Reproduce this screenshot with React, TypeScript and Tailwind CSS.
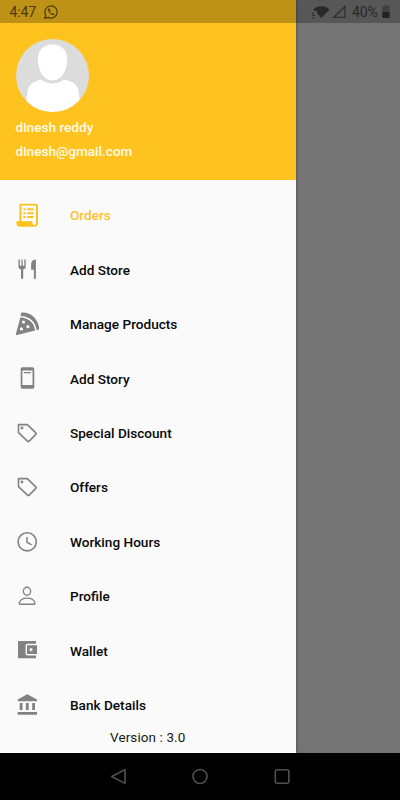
import type { ReactNode } from "react";

function Icon({ children, className = "text-[#828282]" }: { children: ReactNode; className?: string }) {
  return (
    <svg viewBox="0 0 24 24" className={`h-6 w-6 shrink-0 ${className}`} fill="currentColor">
      {children}
    </svg>
  );
}

const TagIcon = () => (
  <Icon>
    <path d="M3.5 3.600h8.800l8.500 8.200c.5.5.5 1.100 0 1.600l-6.600 6.700c-.5.5-1.200.5-1.700 0L3.500 11.600z" fill="none" stroke="currentColor" strokeWidth="1.6" strokeLinejoin="round" />
    <circle cx="7" cy="7" r="1.4" />
  </Icon>
);

const items: { label: string; icon: ReactNode; active?: boolean }[] = [
  {
    label: "Orders",
    active: true,
    icon: (
      <Icon className="text-[#fdc220]">
        <path fillRule="evenodd" d="M4.4.7h16.2c1.4 0 2.4 1 2.4 2.4v16.6c0 2.4-1.6 4.1-4 4.1H5.4c-2.4 0-4.1-1.6-4.1-4v-1.5h3.100zM6.400 2.600v15.600h11v2c0 1.200.6 1.800 1.700 1.800s1.900-.8 1.900-2V2.600z" />
        <path d="M8.5 5.3h2.2v2H8.5zM12.2 5.3h6.2v2h-6.2zM8.5 9.2h2.2v2H8.5zM12.2 9.2h6.2v2h-6.2zM8.5 13.1h2.2v2H8.5zM12.2 13.1h6.2v2h-6.2z" />
      </Icon>
    ),
  },
  {
    label: "Add Store",
    icon: (
      <Icon>
        <path d="M3.4 2.4h1.4v6.3h1.6V2.4h1.3v6.3h1.6V2.4h1.4v6.8c0 1.8-.9 2.9-2.5 3.2v9.3H6V12.4c-1.7-.3-2.6-1.4-2.6-3.2zM20.9 2.4v19.3h-2v-8.9h-2.8V7.1c0-2.8 1.9-4.7 4.8-4.7z" />
      </Icon>
    ),
  },
  {
    label: "Manage Products",
    icon: (
      <Icon>
        <path d="M6.9.6C15.2.1 22.5 6.2 24 15.1c.3 1.8-.1 2.6-2.4 3.1-.5-7.7-6.8-14-15.9-14.1C5.8 2.3 5.9.9 6.9.6z" />
        <path fillRule="evenodd" d="M5.3 5.5c8.2 0 14 5.5 14.8 13.1L1.9 23.1c-.8.2-1.2-.2-1-1zM8.5 8.4a1.6 1.6 0 1 0 0 3.2 1.6 1.6 0 0 0 0-3.2zM12.9 13.1a1.6 1.6 0 1 0 0 3.2 1.6 1.6 0 0 0 0-3.2zM6.4 15.3a1.6 1.6 0 1 0 0 3.2 1.6 1.6 0 0 0 0-3.2z" />
      </Icon>
    ),
  },
  {
    label: "Add Story",
    icon: (
      <Icon>
        <path fillRule="evenodd" d="M7.5 1.200h10c1 0 1.800.8 1.800 1.800v18c0 1-.8 1.800-1.800 1.800h-10c-1 0-1.800-.8-1.800-1.800V3c0-1 .8-1.800 1.800-1.800zM7.400 4.400v14.700h10.100V4.400z" />
        <path d="M8.8 6h7.2v1.3H8.8z" />
      </Icon>
    ),
  },
  { label: "Special Discount", icon: <TagIcon /> },
  { label: "Offers", icon: <TagIcon /> },
  {
    label: "Working Hours",
    icon: (
      <Icon>
        <g fill="none" stroke="currentColor">
          <circle cx="12.2" cy="11.8" r="9.1" strokeWidth="1.6" />
          <path d="M12 6.900v5.300l4.600 2.600" strokeWidth="1.500" />
        </g>
      </Icon>
    ),
  },
  {
    label: "Profile",
    icon: (
      <Icon>
        <g fill="none" stroke="currentColor" strokeWidth="1.35" strokeLinejoin="round">
          <ellipse cx="12" cy="7.2" rx="3.6" ry="4" />
          <path d="M5 20.2c-.6 0-.8-.4-.7-1 .5-3.2 3.8-5.1 7.8-5.1s7.3 1.9 7.8 5.1c.1.6-.1 1-.7 1z" />
        </g>
      </Icon>
    ),
  },
  {
    label: "Wallet",
    icon: (
      <Icon>
        <path d="M3 3.100h18v2.700h-8.400c-1.300 0-2 .7-2 2v7.700c0 1.300.7 2 2 2H21v2.700H3z" />
        <path fillRule="evenodd" d="M12 7.200h10v8.900H12zM16 10a1.600 1.600 0 1 0 0 3.200 1.600 1.600 0 0 0 0-3.200z" />
      </Icon>
    ),
  },
  {
    label: "Bank Details",
    icon: (
      <Icon>
        <path d="M12.3 1.2 22 6.4v1.8H2.7V6.4zM4.7 10h2.8v6.9H4.7zM10.9 10h2.8v6.9h-2.8zM17.2 10H20v6.9h-2.8zM2.7 18.9H22v2.8H2.7z" />
      </Icon>
    ),
  },
];

function StatusBar() {
  return (
    <div className="absolute inset-x-0 top-0 flex h-[23px] items-center bg-black/25 text-[#4a3a0d]">
      <span className="ml-[9.5px] w-[34.5px] pt-px text-[14px] leading-none tracking-[-0.1px]">4:47</span>
      <svg className="h-[14px] w-[14px]" viewBox="0 0 14 14" fill="none" stroke="currentColor">
        <path d="M.8 13.1 1.7 10A6.1 6.1 0 1 1 4 12.3z" strokeWidth="1.2" />
        <path d="M4.6 3.5c-.9.7-.8 1.8.3 3.5 1.2 1.9 2.8 3.1 4.1 3 .8 0 1.3-.5 1.4-1.3L8.8 8l-.9.9C6.8 8.3 6.1 7.5 5.6 6.5l.7-.9-.8-2z" fill="currentColor" stroke="none" />
      </svg>
      <div className="ml-auto mr-[10px] flex items-center text-[#292929]">
        <svg className="h-4 w-9" viewBox="0 0 36 16" fill="currentColor">
          <path d="M2.3 5.4c4.6-4.1 11.6-4.1 16.2 0L10.4 14 6 9.3V7H3.8z" />
          <path d="M1.2 8.7h2v1h-2zM1.2 11h3v1h-3zM1.2 13.2h2v1h-2z" />
          <path d="M34 2.5v10.8H22.8z" fill="none" stroke="currentColor" strokeWidth="1.1" />
        </svg>
        <span className="ml-[5px] w-[30px] pt-px text-[14px] leading-none tracking-[-0.1px]">40%</span>
        <svg className="h-[13px] w-2" viewBox="0 0 8 14">
          <path d="M2.3 0h3.4v1.4H7c.6 0 1 .4 1 1V8H0V2.4c0-.6.4-1 1-1h1.3z" fill="#404040" />
          <path d="M0 7.6h8V13c0 .6-.4 1-1 1H1c-.6 0-1-.4-1-1z" fill="#222" />
        </svg>
      </div>
    </div>
  );
}

export default function App() {
  return (
    <div className="relative flex h-[800px] w-[400px] flex-col overflow-hidden bg-[#747474] font-['Roboto',sans-serif]">
      <aside className="flex h-[753px] w-[295.5px] flex-col bg-[#fafafa] shadow-[1px_0_2px_rgba(0,0,0,0.25)]">
        <header className="h-[180px] bg-[#fec31f] pl-[15.5px] pt-[39px] text-[13.6px] font-medium text-[#fffbea]">
          <svg className="h-[73px] w-[73px] rounded-full bg-[#dcdcdc]" viewBox="0 0 73 73" fill="#fff">
            <path d="M36.500 5.500c9 0 14.700 5.600 14.700 14.800C51.200 32 45.500 41.500 36.500 41.500S21.900 32 21.900 20.300C21.900 11.100 27.500 5.500 36.500 5.500z" />
            <path d="M25 40.500c7 5.300 16 5.300 23 0 7.500 2 12.500 3.800 14 9.500 1 4 1.500 8 1.700 11V73H10.500V61c.2-3 .7-7 1.700-11 1.500-5.700 6-7.500 12.800-9.500z" />
          </svg>
          <p className="mt-[4px] leading-[23px]">dinesh reddy</p>
          <p className="mt-px leading-[23px]">dinesh@gmail.com</p>
        </header>
        <nav className="pt-[7.7px]">
          {items.map(({ label, icon, active }) => (
            <a key={label} className="flex h-[54.44px] items-center gap-[31px] pl-[15px]">
              {icon}
              <span className={`pt-[0.6px] text-[13.6px] leading-5 font-medium ${active ? "text-[#fdc22c]" : "text-[#080808]"}`}>{label}</span>
            </a>
          ))}
        </nav>
        <p className="-mt-[3.7px] text-center text-[13.5px] leading-[18px] tracking-[0.1px] text-[#181818]">Version : 3.0</p>
      </aside>
      <footer className="flex h-[47px] items-center bg-black">
        <svg className="h-[47px] w-[400px]" viewBox="0 0 400 47" fill="none" stroke="#505050" strokeWidth="1.6" strokeLinejoin="round">
          <path d="M125 16.600v13.800L111.800 23.500z" />
          <circle cx="200" cy="23.500" r="7" />
          <rect x="275.300" y="16.800" width="13.600" height="13.400" rx="2" />
        </svg>
      </footer>
      <StatusBar />
    </div>
  );
}
